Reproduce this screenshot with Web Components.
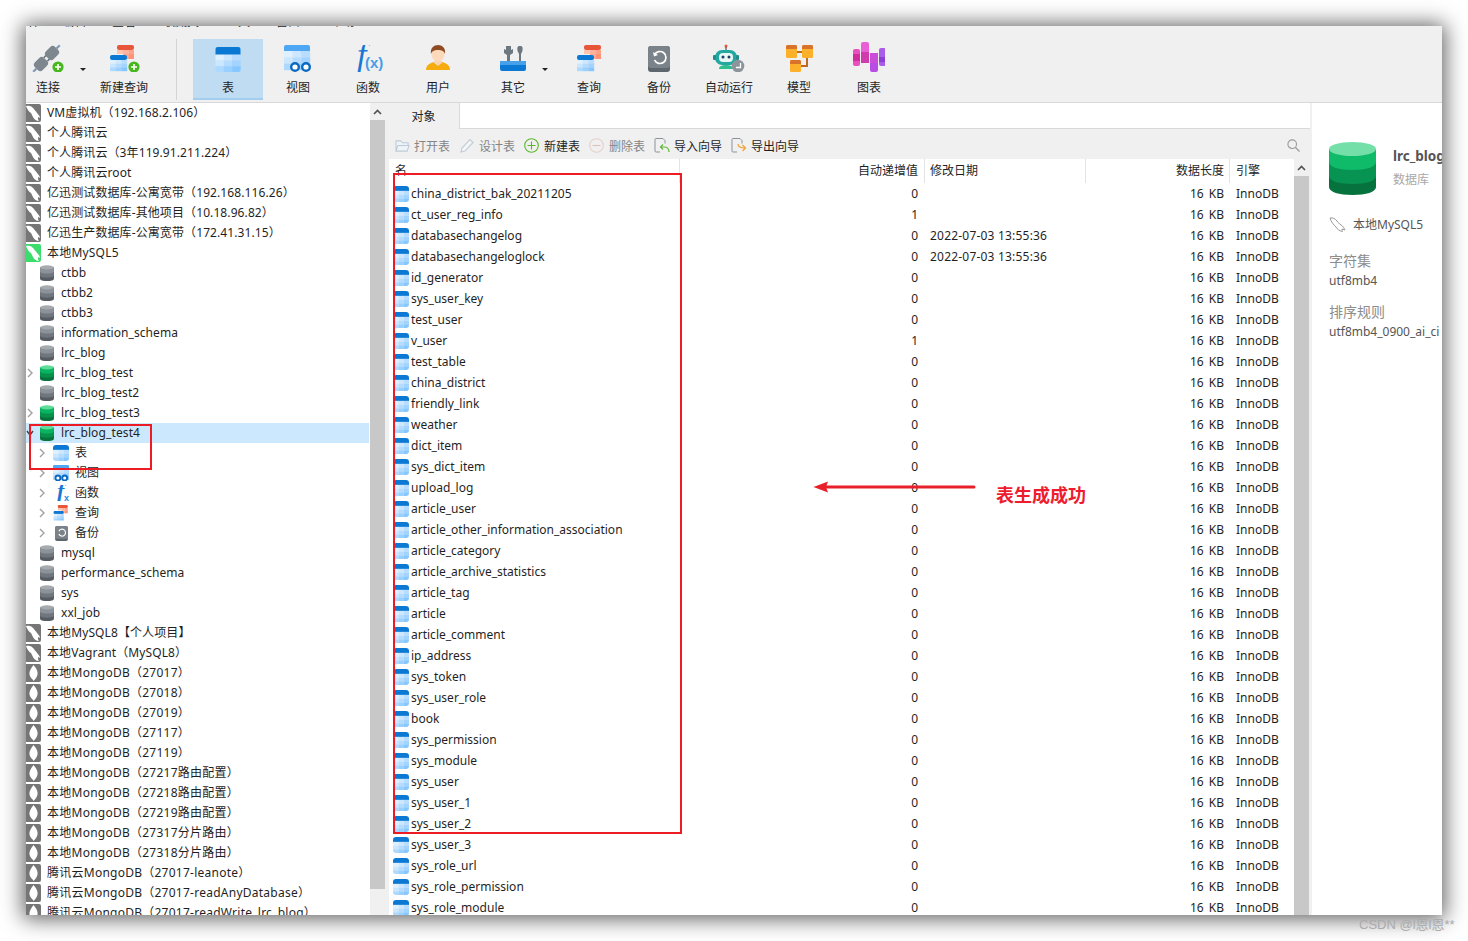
<!DOCTYPE html>
<html lang="zh-CN">
<head>
<meta charset="utf-8">
<title>Navicat</title>
<style>
  html, body { margin: 0; height: 100%; background: #fff; overflow: hidden; }
  body { font: 12px "Noto Sans", "Noto Sans CJK SC", sans-serif; color: #1f1f1f; }
</style>
</head>
<body>
<app-window></app-window>
<red-notes></red-notes>
<script>
const cells = (x, y, w, h, rows = 3, cols = 3) => {
  const tones = ['#dff0ff', '#cde7ff', '#b9ddff', '#cbe6ff', '#b5dcff', '#a3d3ff', '#aed9ff', '#9ad0ff', '#86c7ff'];
  let out = '';
  for (let r = 0; r < rows; r++) {
    for (let c = 0; c < cols; c++) {
      out += `<rect x="${x + c * w / cols}" y="${y + r * h / rows}" width="${w / cols + .2}" height="${h / rows + .2}" fill="${tones[r * 3 + c]}"/>`;
    }
  }
  return out;
};

const table = (head = '#0b79d4') =>
  `<rect width="26" height="8" fill="${head}"/>${cells(0, 8, 26, 18)}`;

const orangeTable = `<g transform="translate(7 0)"><rect x="0" y="0" rx="2" width="17" height="5" fill="#e8563a"/><rect y="5" width="6" height="4" fill="#ffc4b0"/><rect x="6" y="5" width="6" height="4" fill="#ffb39c"/><rect x="12" y="5" width="5" height="4" fill="#ffa28a"/><rect x="6" y="9" width="6" height="5" fill="#ffa78f"/><rect x="12" y="9" width="5" height="5" fill="#ff9478"/></g>`;
const blueFront = `<rect x="0" y="10" rx="2" width="17" height="5" fill="#0b79d4"/>${cells(0, 15, 17, 11)}`;
const plusBadge = (x, y) => `<circle cx="${x}" cy="${y}" r="5.600" fill="#46b81e"/><path d="M${x} ${y - 3}v6M${x - 3} ${y}h6" stroke="#fff" stroke-width="1.600"/>`;
const plug = `<rect x="-6.500" y="-5.500" width="13" height="11" rx="3.500" fill="#7f878e"/>`;

const ICONS = {
  connect: `<svg viewBox="0 0 32 30" width="32" height="30"><g transform="translate(20 11) rotate(-45)">${plug}<path d="M6 0h5" stroke="#7f9ab4" stroke-width="2.200"/><path d="M-6 -2.500h-3M-6 2.500h-3" stroke="#6d7780" stroke-width="1.600"/></g><g transform="translate(9 22) rotate(-45)">${plug}<path d="M-6 0h-5" stroke="#7f9ab4" stroke-width="2.200"/></g>${plusBadge(26, 25)}</svg>`,
  newQuery: `<svg viewBox="0 0 32 28" width="32" height="28"><g transform="translate(2 1)">${orangeTable}${blueFront}</g>${plusBadge(26, 23)}</svg>`,
  table: `<svg viewBox="0 0 26 26" width="26" height="25" style="border-radius:3px">${table()}</svg>`,
  view: `<svg viewBox="0 0 28 27" width="28" height="27"><g><rect width="26" height="8" rx="2" fill="#4fa6f2"/>${cells(0, 6, 26, 19)}</g><g fill="#fff" stroke="#0b69c0" stroke-width="2.400"><circle cx="11" cy="22" r="3.800"/><circle cx="22" cy="22" r="3.800"/></g></svg>`,
  func: `<svg viewBox="0 0 33 27" width="33" height="27"><text x="5" y="21" font-family="Liberation Serif" font-style="italic" font-size="34" fill="#1976d2">f</text><text x="13" y="23" font-family="Liberation Sans" font-size="15" font-weight="700" fill="#4a9be8">(x)</text></svg>`,
  user: `<svg viewBox="0 0 26 28" width="26" height="28"><path d="M1 26c0-5 4-7 8-8h8c4 1 8 3 8 8z" fill="#f5ac0c"/><path d="M10 15h6l1 4-4 3-4-3z" fill="#fbd3b0"/><ellipse cx="13" cy="10" rx="6.600" ry="7.600" fill="#fcd9bb"/><path d="M6 10c-1-6 3-9 7-9s8 3 7 9c-1-3-3-4-7-4s-6 1-7 4z" fill="#8f4b24"/></svg>`,
  other: `<svg viewBox="0 0 27 27" width="27" height="27"><path d="M7 1v4l-2-1v4l3 2v8h3V10l3-2V4l-2 1V1z" fill="#6d7780" transform="translate(-1 0)"/><path d="M19 1c-2 0-2 4-1 6l1 2v10h2V9l1-2c1-2 1-6-1-6z" fill="#6d7780"/><path d="M0 17h26v7a2 2 0 0 1-2 2H2a2 2 0 0 1-2-2z" fill="#0b79d4"/><path d="M0 16h26v4H0z" fill="#46a0ea"/></svg>`,
  query: `<svg viewBox="0 0 25 27" width="25" height="27">${orangeTable}${blueFront}</svg>`,
  backup: `<svg viewBox="0 0 22 26" width="22" height="26"><rect width="22" height="26" rx="3" fill="#5f676e"/><rect width="22" height="22" rx="3" fill="#7b838a"/><path d="M6.500 9a6 6 0 1 1 0 5" fill="none" stroke="#fff" stroke-width="1.700"/><path d="M5 6l1 4.400 4-1.400z" fill="#fff"/></svg>`,
  robot: `<svg viewBox="0 0 32 28" width="32" height="28"><circle cx="13" cy="2" r="1.500" fill="#e8563a"/><path d="M13 3v4" stroke="#333" stroke-width="1"/><rect x="2" y="6" width="22" height="15" rx="7" fill="#22a8a0"/><rect x="0" y="11" width="3" height="5" rx="1" fill="#1d8e88"/><rect x="23" y="11" width="3" height="5" rx="1" fill="#1d8e88"/><rect x="6" y="9" width="14" height="9" rx="4" fill="#e8f6f5"/><circle cx="10" cy="13" r="1.500" fill="#1c3f66"/><circle cx="16" cy="13" r="1.500" fill="#1c3f66"/><path d="M6 25c0-3 3-4 7-4s7 1 7 4z" fill="#2dbf8f"/><circle cx="25" cy="22" r="6.300" fill="#8d959c"/><path d="M27.500 19v4.500H23" fill="none" stroke="#fff" stroke-width="1.300"/></svg>`,
  model: `<svg viewBox="0 0 27 27" width="27" height="27"><path d="M11 7h5M21 13v8h-9" fill="none" stroke="#c06a22" stroke-width="2"/><rect width="11" height="13" rx="1.500" fill="#fdb02a"/><path d="M1.500 0h8A1.500 1.500 0 0 1 11 1.500V4H0V1.500A1.500 1.500 0 0 1 1.500 0z" fill="#d9722a"/><rect x="16" width="11" height="13" rx="1.500" fill="#fdb02a"/><path d="M17.500 0h8A1.500 1.500 0 0 1 27 1.500V4H16V1.500A1.500 1.500 0 0 1 17.500 0z" fill="#d9722a"/><rect x="4" y="15" width="11" height="12" rx="1.500" fill="#fdb02a"/><path d="M5.500 15h8a1.500 1.500 0 0 1 1.500 1.500V19H4v-2.500A1.500 1.500 0 0 1 5.500 15z" fill="#d9722a"/></svg>`,
  chart: `<svg viewBox="0 0 32 30" width="32" height="30"><rect x="0" y="7" width="7" height="17" rx="2" fill="#e84fc0"/><rect x="0" y="12" width="7" height="7" fill="#d42b9e"/><rect x="8" y="0" width="8" height="21" rx="2" fill="#e85fd6"/><rect x="8" y="10" width="8" height="11" fill="#cf3aad"/><rect x="17" y="11" width="8" height="19" rx="2" fill="#b84de6"/><rect x="17" y="11" width="8" height="10" fill="#c94dd8"/><rect x="26" y="6" width="7" height="18" rx="2" fill="#a95ce8"/><rect x="26" y="15" width="7" height="5" fill="#8c3fd4"/></svg>`,
  folder: `<svg viewBox="0 0 16 15" width="15" height="14"><path d="M1 13V2h5l2 2h6v3M1 13l2-6h12l-2 6z" fill="#eef3f7" stroke="#bccbd8" stroke-width="1.100"/></svg>`,
  pencil: `<svg viewBox="0 0 15 15" width="15" height="15"><path d="M1 14l1-4 8-8.500 3 3L5 13z" fill="#f4f6f8" stroke="#c2ccd6" stroke-width="1.100"/></svg>`,
  plus: `<svg viewBox="0 0 15 15" width="15" height="15"><circle cx="7.500" cy="7.500" r="6.800" fill="none" stroke="#5cb82a" stroke-width="1.100"/><path d="M7.500 3.500v8M3.500 7.500h8" stroke="#5cb82a" stroke-width="1.100"/></svg>`,
  minus: `<svg viewBox="0 0 15 15" width="15" height="15"><circle cx="7.500" cy="7.500" r="6.800" fill="none" stroke="#e6cfcb" stroke-width="1.100"/><path d="M3.500 7.500h8" stroke="#e0c2bc" stroke-width="1.100"/></svg>`,
  importer: `<svg viewBox="0 0 16 15" width="16" height="15"><path d="M6 14H2a1 1 0 0 1-1-1V1.500a1 1 0 0 1 1-1h7l2 2v3" fill="none" stroke="#8a939b" stroke-width="1"/><path d="M15 14c0-3-2-5-5-5H7M9 6.500L6.500 9 9 11.500" fill="none" stroke="#62b53a" stroke-width="1.200"/></svg>`,
  exporter: `<svg viewBox="0 0 16 15" width="16" height="15"><path d="M6 14H2a1 1 0 0 1-1-1V1.500a1 1 0 0 1 1-1h7l2 2v3" fill="none" stroke="#8a939b" stroke-width="1"/><path d="M7 6c0 3 2 4 7 4M11.500 7l3 3-3 3" fill="none" stroke="#f0a030" stroke-width="1.200"/></svg>`,
  search: `<svg viewBox="0 0 13 13" width="13" height="13"><circle cx="5.200" cy="5.200" r="4.300" fill="none" stroke="#9a9a9a" stroke-width="1.100"/><path d="M8.500 8.500l4 4" stroke="#9a9a9a" stroke-width="1.300"/></svg>`,
  dolphinGrey: dolphin('#767676'),
  dolphinGreen: dolphin('#3bdb6c'),
  mongo: `<svg viewBox="0 0 15 18" width="15" height="18"><rect x="-3" width="18" height="18" rx="2" fill="#767676"/><path d="M7.500 1C11 5 12 8 11.500 10.500 11 13.500 9 15 7.800 17 6.500 15 4 13.500 3.500 10.500 3 8 4.500 5 7.500 1z" fill="#fff"/></svg>`,
  dolphinLine: `<svg viewBox="0 0 17 15" width="17" height="15"><path d="M1 1c3-.5 5 .5 7 3 1 2 2 2 4 4 2 1 3 3 4 5l-3-1c0 1 0 2 .5 2.500-3-.5-5-2-6.500-4.500C5 8 2 5 1 1z" fill="none" stroke="#9a9a9a" stroke-width="1"/></svg>`,
  dbGrey: cylinder(['#8c9299', '#6f767d', '#565c62', '#a6abb0']),
  dbGreen: cylinder(['#0ab35f', '#07914c', '#06733c', '#5fdc9c']),
  dbBig: cylinder(['#0fbb69', '#079452', '#06723d', '#74dfa9'], 47, 54),
  fx: `<svg viewBox="0 0 17 16" width="17" height="16"><text x="4" y="13" font-family="Liberation Serif" font-style="italic" font-weight="700" font-size="22" fill="#1976d2">f</text><text x="11" y="15.500" font-family="Liberation Sans" font-size="9" font-weight="700" fill="#1e88e5">x</text></svg>`,
  miniTable: `<svg viewBox="0 0 26 26" width="16" height="16" style="border-radius:3px">${table()}</svg>`,
  miniView: `<svg viewBox="0 0 26 26" width="16" height="16"><rect width="26" height="7" rx="2" fill="#4fa6f2"/>${cells(0, 6, 26, 18)}<g fill="#fff" stroke="#0b69c0" stroke-width="3"><circle cx="8" cy="21" r="4"/><circle cx="19" cy="21" r="4"/></g></svg>`,
  miniQuery: `<svg viewBox="0 0 25 27" width="16" height="16">${orangeTable}${blueFront}</svg>`,
  miniBackup: `<svg viewBox="0 0 22 26" width="13" height="15"><rect width="22" height="26" rx="3" fill="#5f676e"/><rect width="22" height="22" rx="3" fill="#7b838a"/><path d="M6.500 9a6 6 0 1 1 0 5" fill="none" stroke="#fff" stroke-width="2"/></svg>`,
  rowTable: `<svg viewBox="0 0 26 26" width="16" height="16" style="border-radius:3px;display:block;flex:none">${table()}</svg>`
};

function dolphin(bg) {
  return `<svg viewBox="0 0 15 18" width="15" height="18"><rect x="-3" width="18" height="18" rx="2" fill="${bg}"/><path d="M0 2c3-1 6 0 8 3 1 2 2 2 3 4 1 1 3 3 3 5l-2-1c0 2 0 3 1 4-3 0-5-2-6-4L5 9C3 8 1 5 0 2z" fill="#fff"/></svg>`;
}

function cylinder([top, mid, low, cap], w = 14, h = 16) {
  return `<svg viewBox="0 0 47 54" width="${w}" height="${h}"><path d="M0 8v38c0 5 10 8 23.500 8S47 51 47 46V8z" fill="${low}"/><path d="M0 8v27c0 5 10 8 23.500 8S47 40 47 35V8z" fill="${mid}"/><path d="M0 8v13c0 5 10 8 23.500 8S47 26 47 21V8z" fill="${top}"/><ellipse cx="23.500" cy="8" rx="23.500" ry="7" fill="${cap}"/></svg>`;
}

const TOOLS = [
  ['connect', '连接', 44], ['drop'], ['newQuery', '新建查询', 70], ['sep'],
  ['table', '表', 70, 'active'], ['view', '视图', 70], ['func', '函数', 70], ['user', '用户', 70],
  ['gap'], ['other', '其它', 70], ['drop2'], ['query', '查询', 70], ['backup', '备份', 70],
  ['robot', '自动运行', 70], ['model', '模型', 70], ['chart', '图表', 70]
];

const TREE = [
  ['conn', '', 'VM虚拟机（192.168.2.106）'], ['conn', '', '个人腾讯云'], ['conn', '', '个人腾讯云（3年119.91.211.224）'],
  ['conn', '', '个人腾讯云root'], ['conn', '', '亿迅测试数据库-公寓宽带（192.168.116.26）'],
  ['conn', '', '亿迅测试数据库-其他项目（10.18.96.82）'], ['conn', '', '亿迅生产数据库-公寓宽带（172.41.31.15）'],
  ['open', '', '本地MySQL5'],
  ['db', '', 'ctbb'], ['db', '', 'ctbb2'], ['db', '', 'ctbb3'], ['db', '', 'information_schema'], ['db', '', 'lrc_blog'],
  ['dbon', 'closed', 'lrc_blog_test'], ['db', '', 'lrc_blog_test2'], ['dbon', 'closed', 'lrc_blog_test3'],
  ['dbon', 'expanded', 'lrc_blog_test4', 'selected'],
  ['sub', 'miniTable', '表'], ['sub', 'miniView', '视图'], ['sub', 'fx', '函数'], ['sub', 'miniQuery', '查询'], ['sub', 'miniBackup', '备份'],
  ['db', '', 'mysql'], ['db', '', 'performance_schema'], ['db', '', 'sys'], ['db', '', 'xxl_job'],
  ['conn', '', '本地MySQL8【个人项目】'], ['conn', '', '本地Vagrant（MySQL8）'],
  ['mongo', '', '本地MongoDB（27017）'], ['mongo', '', '本地MongoDB（27018）'], ['mongo', '', '本地MongoDB（27019）'],
  ['mongo', '', '本地MongoDB（27117）'], ['mongo', '', '本地MongoDB（27119）'], ['mongo', '', '本地MongoDB（27217路由配置）'],
  ['mongo', '', '本地MongoDB（27218路由配置）'], ['mongo', '', '本地MongoDB（27219路由配置）'],
  ['mongo', '', '本地MongoDB（27317分片路由）'], ['mongo', '', '本地MongoDB（27318分片路由）'],
  ['mongo', '', '腾讯云MongoDB（27017-leanote）'], ['mongo', '', '腾讯云MongoDB（27017-readAnyDatabase）'],
  ['mongo', '', '腾讯云MongoDB（27017-readWrite_lrc_blog）']
];

const TABLES = ['china_district_bak_20211205', 'ct_user_reg_info', 'databasechangelog', 'databasechangeloglock', 'id_generator',
  'sys_user_key', 'test_user', 'v_user', 'test_table', 'china_district', 'friendly_link', 'weather', 'dict_item', 'sys_dict_item',
  'upload_log', 'article_user', 'article_other_information_association', 'article_category', 'article_archive_statistics',
  'article_tag', 'article', 'article_comment', 'ip_address', 'sys_token', 'sys_user_role', 'book', 'sys_permission', 'sys_module',
  'sys_user', 'sys_user_1', 'sys_user_2', 'sys_user_3', 'sys_role_url', 'sys_role_permission', 'sys_role_module'];

class ToolButton extends HTMLElement {
  connectedCallback() {
    const width = this.getAttribute('width');
    this.attachShadow({mode: 'open'}).innerHTML = `
      <style>
        :host { display: flex; flex-direction: column; align-items: center; width: ${width}px; height: 61px; box-sizing: border-box; border-bottom: 2px solid transparent; }
        :host([active]) { background: #bfdcf3; border-bottom-color: #a3cfee; }
        .icon { height: 37px; display: flex; align-items: flex-end; padding-bottom: 4px; box-sizing: border-box; }
        svg { display: block; }
        .label { line-height: 16px; margin-top: 4px; white-space: nowrap; }
      </style>
      <div class="icon">${ICONS[this.getAttribute('icon')]}</div>
      <div class="label"><slot></slot></div>`;
  }
}
customElements.define('tool-button', ToolButton);

class MainToolbar extends HTMLElement {
  connectedCallback() {
    const items = TOOLS.map(([icon, label, width, active]) => {
      if (icon === 'drop') return '<i class="caret" style="width:19px"></i>';
      if (icon === 'drop2') return '<i class="caret" style="width:6px;margin-left:-3px;margin-right:3px"></i>';
      if (icon === 'sep') return '<i class="sep"></i>';
      if (icon === 'gap') return '<i style="width:5px"></i>';
      return `<tool-button icon="${icon}" width="${width}" ${active || ''}>${label}</tool-button>`;
    }).join('');
    this.attachShadow({mode: 'open'}).innerHTML = `
      <style>
        :host { display: flex; height: 73px; padding-top: 9px; box-sizing: border-box; background: #f0f0f0; border-bottom: 1px solid #d9d9d9; flex: none; }
        .caret { display: block; position: relative; height: 61px; }
        .caret::after { content: ""; position: absolute; right: 3px; top: 29px; border: 3px solid transparent; border-top: 3px solid #222; border-bottom: 0; }
        .sep { display: block; width: 1px; height: 61px; background: #d4d4d4; margin: 0 16px 0 17px; }
        i { flex: none; }
      </style>${items}`;
  }
}
customElements.define('main-toolbar', MainToolbar);

class TreeRow extends HTMLElement {
  connectedCallback() {
    const kind = this.getAttribute('kind');
    const mark = this.getAttribute('mark') || '';
    const map = {conn: 'dolphinGrey', open: 'dolphinGreen', mongo: 'mongo', db: 'dbGrey', dbon: 'dbGreen'};
    const icon = kind === 'sub' ? ICONS[mark] : ICONS[map[kind]];
    const pad = {conn: 0, open: 0, mongo: 0, db: 14, dbon: 14, sub: 27}[kind];
    const spacing = {conn: .1, open: .2, mongo: .25, db: .06, dbon: .12, sub: 0}[kind];
    const chevron = kind === 'sub' || mark === 'closed'
      ? `<svg class="chev" style="left:${kind === 'sub' ? 12 : 0}px" width="8" height="10" viewBox="0 0 8 10"><path d="M2 1l4 4-4 4" fill="none" stroke="#a0a0a0" stroke-width="1.400"/></svg>`
      : mark === 'expanded'
        ? '<svg class="chev" style="left:0" width="8" height="10" viewBox="0 0 8 10"><path d="M1 3l3 4 3-4" fill="none" stroke="#444" stroke-width="1.400"/></svg>'
        : '';
    this.attachShadow({mode: 'open'}).innerHTML = `
      <style>
        :host { display: flex; align-items: center; height: 20px; position: relative; padding-left: ${pad}px; white-space: nowrap; flex: none; }
        :host([selected]) { background: #cce8ff; }
        .chev { position: absolute; top: 5px; }
        .icon { width: ${kind === 'sub' ? 16 : kind === 'db' || kind === 'dbon' ? 14 : 15}px; display: flex; align-items: center; justify-content: center; }
        svg { display: block; flex: none; }
        .label { margin-left: ${kind === 'db' || kind === 'dbon' ? 7 : 6}px; padding-bottom: 2px; letter-spacing: ${spacing}px; }
      </style>
      ${chevron}<span class="icon">${icon}</span><span class="label"><slot></slot></span>`;
  }
}
customElements.define('tree-row', TreeRow);

class ScrollRail extends HTMLElement {
  connectedCallback() {
    this.attachShadow({mode: 'open'}).innerHTML = `
      <style>
        :host { display: flex; flex-direction: column; width: 15px; flex: none; background: #f0f0f0; }
        .arrow { height: var(--arrow, 17px); flex: none; display: flex; align-items: center; justify-content: center; }
        .thumb { height: var(--thumb, auto); flex: var(--grow, 0 0 auto); background: #c8c8c8; }
      </style>
      <div class="arrow"><svg width="9" height="6" viewBox="0 0 9 6"><path d="M1 5l3.500-3.500L8 5" fill="none" stroke="#505050" stroke-width="1.600"/></svg></div>
      <div class="thumb"></div>`;
  }
}
customElements.define('scroll-rail', ScrollRail);

class ConnTree extends HTMLElement {
  connectedCallback() {
    this.attachShadow({mode: 'open'}).innerHTML = `
      <style>
        :host { display: flex; flex-direction: column; width: 344px; box-sizing: border-box; padding-right: 1px; flex: none; background: #fff; overflow: hidden; }
      </style>
      ${TREE.map(([kind, mark, label, sel]) => `<tree-row kind="${kind}" mark="${mark}" ${sel || ''}>${label}</tree-row>`).join('')}`;
  }
}
customElements.define('conn-tree', ConnTree);

class ObjectRow extends HTMLElement {
  connectedCallback() {
    const a = n => this.getAttribute(n) || '';
    this.attachShadow({mode: 'open'}).innerHTML = `
      <style>
        :host { display: grid; grid-template-columns: 291px 245px 161px 144px 64px; height: 21px; align-items: center; white-space: nowrap; flex: none; }
        .name { display: flex; align-items: center; gap: 2px; padding-left: 4px; }
        .auto { text-align: right; padding-right: 7px; }
        .size { text-align: right; padding-right: 6px; word-spacing: 2px; }
        .date { padding-left: 5px; letter-spacing: .2px; }
        .eng { padding-left: 6px; }
      </style>
      <div class="name">${ICONS.rowTable}<slot></slot></div>
      <div class="auto">${a('auto')}</div><div class="date">${a('date')}</div>
      <div class="size">16 KB</div><div class="eng">InnoDB</div>`;
  }
}
customElements.define('object-row', ObjectRow);

class ObjectTable extends HTMLElement {
  connectedCallback() {
    const rows = TABLES.map((name, i) => {
      const auto = i === 1 || i === 7 ? 1 : 0;
      const date = i === 2 || i === 3 ? '2022-07-03 13:55:36' : '';
      return `<object-row auto="${auto}" date="${date}">${name}</object-row>`;
    }).join('');
    this.attachShadow({mode: 'open'}).innerHTML = `
      <style>
        :host { display: flex; flex: 1; min-height: 0; background: #fff; overflow: hidden; }
        .grid { flex: 1; display: flex; flex-direction: column; min-width: 0; overflow: hidden; }
        .head { display: grid; grid-template-columns: 291px 245px 161px 144px 64px; height: 24px; flex: none; line-height: 23px; white-space: nowrap; }
        .head div { border-right: 1px solid #e3e3e3; box-sizing: border-box; }
        .head div:last-child { border: 0; }
        .l { padding-left: 5px; }
        .r { text-align: right; padding-right: 5px; }
        .head .first { padding-left: 6px; }
        .head .auto { padding-right: 6px; }
        scroll-rail { --grow: 1 1 0; }
      </style>
      <div class="grid">
        <div class="head"><div class="first">名</div><div class="r auto">自动递增值</div><div class="l">修改日期</div><div class="r">数据长度</div><div class="l" style="padding-left:6px">引擎</div></div>
        ${rows}
      </div>
      <scroll-rail></scroll-rail>`;
  }
}
customElements.define('object-table', ObjectTable);

class ActionBar extends HTMLElement {
  connectedCallback() {
    const acts = [
      ['folder', '打开表', 0, 4, 10], ['pencil', '设计表', 0, 4, 9], ['plus', '新建表', 1, 5, 9],
      ['minus', '删除表', 0, 5, 9], ['importer', '导入向导', 1, 4, 9], ['exporter', '导出向导', 1, 4, 9]
    ];
    this.attachShadow({mode: 'open'}).innerHTML = `
      <style>
        :host { display: flex; align-items: center; height: 30px; flex: none; padding: 3px 12px 0 6px; box-sizing: border-box; background: #f0f0f0; }
        .act { display: flex; align-items: center; white-space: nowrap; color: #858585; }
        .act.on { color: #1f1f1f; }
        svg { display: block; }
        .find { margin-left: auto; }
      </style>
      ${acts.map(([i, t, on, gap, after]) => `<span class="act ${on ? 'on' : ''}" style="gap:${gap}px;margin-right:${after}px">${ICONS[i]}${t}</span>`).join('')}
      <span class="find">${ICONS.search}</span>`;
  }
}
customElements.define('action-bar', ActionBar);

class ObjectPane extends HTMLElement {
  connectedCallback() {
    this.attachShadow({mode: 'open'}).innerHTML = `
      <style>
        :host { display: flex; flex-direction: column; flex: 1; min-width: 0; background: #f0f0f0; }
        .tabs { display: flex; height: 26px; flex: none; margin: 0 2px 0 -4px; background: #fff; border-bottom: 1px solid #d9d9d9; box-sizing: border-box; }
        .tab { width: 75px; height: 26px; padding-left: 3px; background: #f0f0f0; border-right: 1px solid #d9d9d9; box-sizing: border-box; text-align: center; line-height: 27px; }
        .inner { margin-right: 3px; display: flex; flex-direction: column; flex: 1; min-height: 0; }
      </style>
      <div class="tabs"><div class="tab">对象</div></div>
      <action-bar></action-bar>
      <div class="inner"><object-table></object-table></div>`;
  }
}
customElements.define('object-pane', ObjectPane);

class InfoPanel extends HTMLElement {
  connectedCallback() {
    this.attachShadow({mode: 'open'}).innerHTML = `
      <style>
        :host { display: block; width: 130px; flex: none; background: #fff; padding: 38px 0 0 17px; box-sizing: border-box; overflow: hidden; white-space: nowrap; }
        svg { display: block; flex: none; }
        .title { display: flex; gap: 17px; }
        .title b { display: block; font-size: 13.500px; line-height: 18px; margin-top: 6px; color: #555; }
        .title span { display: block; line-height: 16px; margin-top: 7px; color: #a8a8a8; }
        .server { display: flex; align-items: center; gap: 7px; margin-top: 21px; height: 16px; color: #555; }
        .key { color: #8d8d8d; font-size: 14px; line-height: 18px; }
        .val { color: #555; line-height: 18px; margin-top: 2px; }
        .k1 { margin-top: 20px; }
        .k2 { margin-top: 13px; }
      </style>
      <div class="title">${ICONS.dbBig}<div><b>lrc_blog</b><span>数据库</span></div></div>
      <div class="server">${ICONS.dolphinLine}本地MySQL5</div>
      <div class="key k1">字符集</div><div class="val">utf8mb4</div>
      <div class="key k2">排序规则</div><div class="val">utf8mb4_0900_ai_ci</div>`;
  }
}
customElements.define('info-panel', InfoPanel);

class AppWindow extends HTMLElement {
  connectedCallback() {
    this.attachShadow({mode: 'open'}).innerHTML = `
      <style>
        :host { display: flex; flex-direction: column; width: 1416px; height: 889px; margin: 26px 0 0 26px; background: #f0f0f0; box-shadow: 0 1px 20px 3px rgba(0,0,0,.62); overflow: hidden; }
        .menu { height: 4px; flex: none; overflow: hidden; display: flex; background: #f0f0f0; }
        .menu span { flex: none; margin-top: -12px; line-height: 16px; position: relative; white-space: nowrap; }
        .main { display: flex; flex: 1; min-height: 0; }
        .rail { --thumb: 769px; margin-right: 4px; }
      </style>
      <div class="menu">
        <span style="margin-left:2px;width:34px">件</span><span style="width:50px">编辑</span><span style="width:51px">查看</span><span style="width:63px">收藏夹</span><span style="width:50px">工具</span><span style="width:55px">窗口</span><span>帮助</span>
      </div>
      <main-toolbar></main-toolbar>
      <div class="main">
        <conn-tree></conn-tree>
        <scroll-rail class="rail"></scroll-rail>
        <object-pane></object-pane>
        <info-panel></info-panel>
      </div>`;
  }
}
customElements.define('app-window', AppWindow);

class RedNotes extends HTMLElement {
  connectedCallback() {
    this.attachShadow({mode: 'open'}).innerHTML = `
      <style>
        :host { display: block; position: absolute; inset: 0; pointer-events: none; }
        .box { position: absolute; border: 2px solid #ed1c24; box-sizing: border-box; }
        svg { position: absolute; left: 810px; top: 478px; }
        .say { position: absolute; left: 996px; top: 482px; font: 700 18px/24px "Noto Sans CJK SC", sans-serif; color: #ed1c2e; white-space: nowrap; }
        .mark { position: absolute; left: 1359px; top: 917px; font: 13px/16px "Liberation Sans", "Noto Sans CJK SC", sans-serif; color: #ababab; white-space: nowrap; }
      </style>
      <div class="box" style="left:393px;top:173px;width:289px;height:661px"></div>
      <div class="box" style="left:29px;top:424px;width:123px;height:46px"></div>
      <svg width="170" height="18" viewBox="0 0 170 18"><path d="M164 9H16" stroke="#e8202a" stroke-width="3" stroke-linecap="round"/><path d="M3.500 9L18 3.500 16 9l2 5.500z" fill="#e8202a"/></svg>
      <div class="say">表生成成功</div>
      <div class="mark">CSDN @l恩l恩**</div>`;
  }
}
customElements.define('red-notes', RedNotes);
</script>
</body>
</html>
